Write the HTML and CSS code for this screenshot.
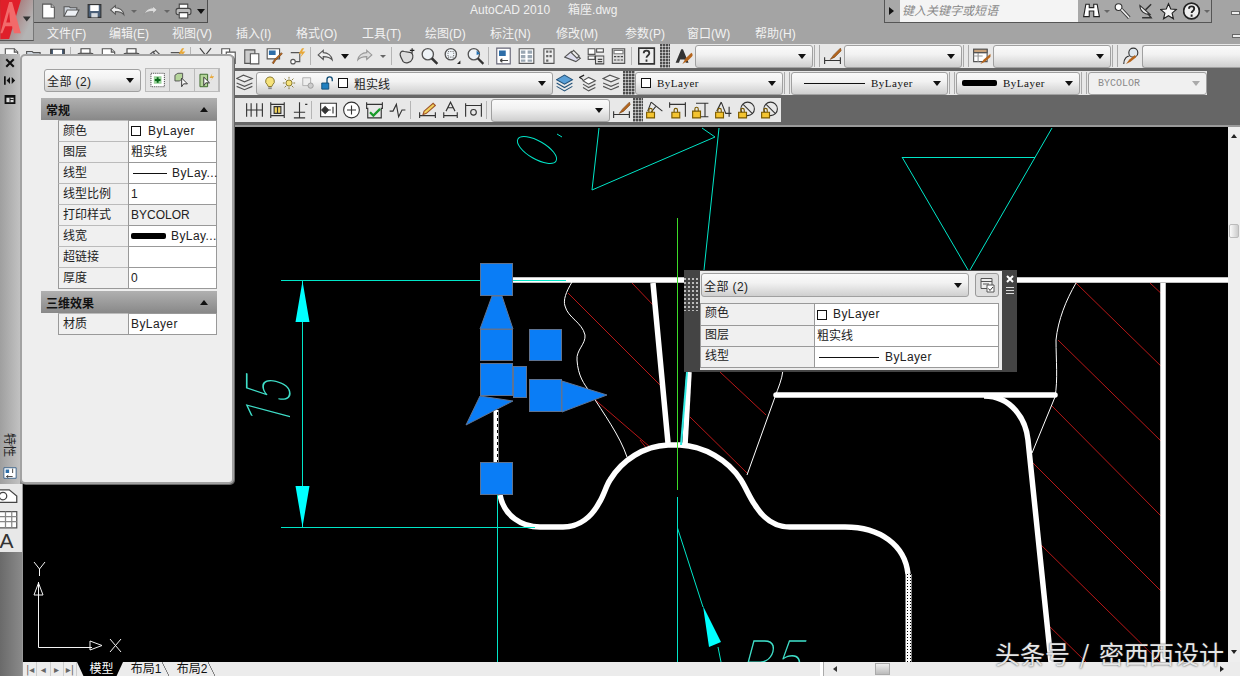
FILE: index.html
```html
<!DOCTYPE html>
<html lang="zh">
<head>
<meta charset="utf-8">
<title>AutoCAD 2010</title>
<link rel="stylesheet" href="styles.css">
</head>
<body>
<svg class="sprite" aria-hidden="true">
  <symbol id="new" viewBox="0 0 16 16"><path d="M2.5 1.5h8l3 3v10h-11z" fill="#fff" stroke="#555"/><path d="M10.5 1.5v3h3" fill="#ccc" stroke="#555"/></symbol>
  <symbol id="open" viewBox="0 0 16 16"><path d="M1 13V4h5l1 1h6v2" fill="#cfd6de" stroke="#555"/><path d="M1 13l3-6h11l-3 6z" fill="#eef1f5" stroke="#555"/></symbol>
  <symbol id="save" viewBox="0 0 16 16"><path d="M2 2h12v12H2z" fill="#4a5f78" stroke="#333"/><path d="M4 2.500h8V8H4z" fill="#fff"/><path d="M5 10h6v4H5z" fill="#d5d9de"/></symbol>
  <symbol id="undo" viewBox="0 0 16 16"><path d="M6 3L1.500 7 6 11V8.500c3 0 6 .5 8 3-.5-4-4-6.500-8-6.500z" fill="#eee" stroke="#555"/></symbol>
  <symbol id="redo" viewBox="0 0 16 16"><path d="M10 3l4.500 4L10 11V8.500c-3 0-6 .5-8 3 .5-4 4-6.500 8-6.500z" fill="#ddd" stroke="#999"/></symbol>
  <symbol id="print" viewBox="0 0 16 16"><path d="M4 1.500h8V6H4z" fill="#fff" stroke="#444"/><rect x="1" y="5.500" width="14" height="6" rx="2" fill="#bbb" stroke="#444"/><path d="M4 9.500h8v5H4z" fill="#fff" stroke="#444"/></symbol>
  <symbol id="binoc" viewBox="0 0 16 16"><path d="M3 2h3v3h4V2h3l2 11h-5V8H6v5H1z" fill="#fff" stroke="#222"/></symbol>
  <symbol id="key" viewBox="0 0 16 16"><circle cx="4.500" cy="4.500" r="3" fill="#fff" stroke="#333"/><path d="M7 6.500l7 7.500" stroke="#333" stroke-width="3"/><path d="M7 6.500l7 7.500" stroke="#eee" stroke-width="1.500"/></symbol>
  <symbol id="sat" viewBox="0 0 16 16"><path d="M3 3a8 8 0 0 0 9 8z" fill="#eee" stroke="#333"/><path d="M8 7l5-5M5 14h8l-3-4" fill="none" stroke="#333" stroke-width="1.300"/></symbol>
  <symbol id="star" viewBox="0 0 16 16"><path d="M8 1.500l2 4.700 5 .4-3.800 3.300 1.200 5L8 12.200l-4.400 2.700 1.200-5L1 6.600l5-.4z" fill="#f4f4f4" stroke="#222"/></symbol>
  <symbol id="cut" viewBox="0 0 16 16"><path d="M3 1l8 10M13 1L5 11" stroke="#444" fill="none"/><circle cx="4" cy="13" r="2" fill="none" stroke="#444"/><circle cx="12" cy="13" r="2" fill="none" stroke="#444"/></symbol>
  <symbol id="copy" viewBox="0 0 16 16"><path d="M2 1.500h7v10H2z" fill="#fff" stroke="#555"/><path d="M6 4.500h8v10H6z" fill="#fff" stroke="#555"/></symbol>
  <symbol id="paste" viewBox="0 0 16 16"><path d="M2 2.500h9v12H2z" fill="#ccc" stroke="#555"/><path d="M7 6h7.500v9H7z" fill="#fff" stroke="#555"/></symbol>
  <symbol id="match" viewBox="0 0 16 16"><path d="M1.500 1.500h11v9h-11z" fill="#fff" stroke="#555"/><path d="M3 3h6v4H3z" fill="#2e6ea8"/><path d="M15 6l-6 6-2 3-1-1 2-3 6-6z" fill="#b5651d" stroke="#6b3a10" stroke-width=".5"/></symbol>
  <symbol id="block" viewBox="0 0 16 16"><circle cx="4" cy="13" r="2" fill="#fff" stroke="#555"/><path d="M2 5h8v8H6" fill="none" stroke="#555"/><path d="M12 1l-3 5h3l-2 4 5-6h-3l2-3z" fill="#e8a838"/></symbol>
  <symbol id="pan" viewBox="0 0 16 16"><path d="M3 9c-2-4 1-6 3-5l6 1c2 1 2 4 1 6-1 3-6 4-8 2z" fill="#ddd" stroke="#444"/><path d="M11 3h4M13 1v4" stroke="#222"/></symbol>
  <symbol id="zoom" viewBox="0 0 16 16"><circle cx="6.500" cy="6.500" r="5" fill="#eef3f7" stroke="#555" stroke-width="1.200"/><path d="M10 10l5 5" stroke="#333" stroke-width="2.200"/></symbol>
  <symbol id="zoomw" viewBox="0 0 16 16"><circle cx="6.500" cy="6.500" r="5" fill="#eef3f7" stroke="#555" stroke-width="1.200"/><path d="M4 4h5v5H4z" fill="none" stroke="#777" stroke-dasharray="1 1"/><path d="M12 15l3-3v3z" fill="#222"/></symbol>
  <symbol id="zoomb" viewBox="0 0 16 16"><circle cx="6.500" cy="6.500" r="5" fill="#eef3f7" stroke="#555" stroke-width="1.200"/><path d="M10 10l5 5" stroke="#333" stroke-width="2"/><path d="M9 3l3 3-3 1z" fill="#1f6fb2"/></symbol>
  <symbol id="props" viewBox="0 0 16 16"><path d="M2 1h12v14H2z" fill="#fff" stroke="#667"/><path d="M4 3h6v5H4z" fill="#2e6ea8"/><path d="M5 12h7M5 12l2-1.500M5 12l2 1.500" stroke="#444" fill="none"/></symbol>
  <symbol id="grid" viewBox="0 0 16 16"><path d="M1.500 1.500h13v13h-13z" fill="#fff" stroke="#555"/><path d="M3 3h4v3H3zM9 3h4v3H9zM3 7h4v3H3zM9 7h4v3H9zM3 11h4v2H3zM9 11h4v2H9z" fill="#9aa7b3"/></symbol>
  <symbol id="tool" viewBox="0 0 16 16"><path d="M3 1.500h9v13H3z" fill="#eee" stroke="#555"/><path d="M5 3h2v2H5zM8 3h2v2H8zM5 7h2v2H5zM8 7h2v2H8zM5 11h2v2H5z" fill="#666"/></symbol>
  <symbol id="sheet" viewBox="0 0 16 16"><path d="M1 9l6-5 8 6-4 3z" fill="#dde" stroke="#555"/><path d="M9 3l5 5-2 2-5-5z" fill="#eee" stroke="#555"/></symbol>
  <symbol id="mark" viewBox="0 0 16 16"><path d="M1.500 1.500h6v5h-6zM9 1.500h6v3H9zM1.500 8h6v3h-6z" fill="#fff" stroke="#555"/><path d="M8 8h7.500v7H8z" fill="#e6e6e6" stroke="#444"/><path d="M10 11h4M10 13h4" stroke="#444"/></symbol>
  <symbol id="calc" viewBox="0 0 16 16"><path d="M2.500 1.500h11v13h-11z" fill="#ddd" stroke="#555"/><path d="M4 3h8v3H4z" fill="#fff" stroke="#777"/><path d="M4 8h2v1H4zM7 8h2v1H7zM10 8h2v1h-2zM4 11h2v1H4zM7 11h2v1H7zM10 11h2v1h-2z" fill="#444"/></symbol>
  <symbol id="helpbox" viewBox="0 0 16 16"><path d="M1 1h14v14H1z" fill="#eee" stroke="#333" stroke-width="1.500"/><path d="M5.500 5.500c0-3 5-3 5 0 0 2-2.500 2-2.500 4M8 11v2" fill="none" stroke="#333" stroke-width="1.600"/></symbol>
  <symbol id="helpc" viewBox="0 0 16 16"><circle cx="8" cy="8" r="7" fill="#eee" stroke="#222" stroke-width="1.500"/><path d="M5.800 6c0-2.800 4.600-2.800 4.600 0 0 2-2.300 1.800-2.300 3.700M8.100 11v2" fill="none" stroke="#222" stroke-width="1.700"/></symbol>
  <symbol id="style" viewBox="0 0 16 16"><path d="M1 14L6 2h1.500l5 12h-2.500l-1-3H5l-1 3z" fill="#333"/><path d="M15 5l-5 5-3 5 5-3 5-5z" fill="#b5651d"/></symbol>
  <symbol id="dimbrush" viewBox="0 0 16 16"><path d="M1 9v6M15 9v6M1 12h14" fill="none" stroke="#333"/><path d="M15 1L9 7l-3 4 4-2 6-6z" fill="#b5651d" stroke="#6b3a10" stroke-width=".5"/></symbol>
  <symbol id="tablebrush" viewBox="0 0 16 16"><path d="M1 2h12v11H1z" fill="#fff" stroke="#555"/><path d="M1 5h12M1 8h8M5 5v8" stroke="#999"/><path d="M1 2h12v3H1z" fill="#c9a27a" stroke="#555"/><path d="M16 6l-6 5-3 4 4-2 6-5z" fill="#b5651d"/></symbol>
  <symbol id="mlbrush" viewBox="0 0 16 16"><circle cx="10.500" cy="5" r="4" fill="#dfe8ef" stroke="#333"/><path d="M2 15c0-5 3-7 5-7" fill="none" stroke="#333"/><path d="M12 7l-5 4-3 4 4-2 5-4z" fill="#b5651d"/></symbol>
  <symbol id="layers" viewBox="0 0 16 16"><path d="M1 4l6-3 8 3-7 3z" fill="#eee" stroke="#555"/><path d="M1 8l7 3 7-3M1 11l7 3 7-3" fill="none" stroke="#555"/></symbol>
  <symbol id="layers2" viewBox="0 0 16 16"><path d="M1 5l7-4 7 4-7 4z" fill="#5aa0d8" stroke="#24537a"/><path d="M1 8l7 4 7-4M1 11l7 4 7-4" fill="none" stroke="#24537a"/></symbol>
  <symbol id="layers3" viewBox="0 0 16 16"><path d="M4 6l5-3 6 3-6 3z" fill="#fff" stroke="#555"/><path d="M4 9l5 3 6-3M4 12l5 3 6-3" fill="none" stroke="#555"/><path d="M5 1L1 3l3 2" fill="none" stroke="#222"/></symbol>
  <symbol id="bulb" viewBox="0 0 16 16"><path d="M8 1a5 5 0 0 0-3 9l1 2h4l1-2a5 5 0 0 0-3-9z" fill="#f6e27a" stroke="#7a6a20"/><path d="M6 13h4v2H6z" fill="#888"/></symbol>
  <symbol id="sun" viewBox="0 0 16 16"><circle cx="8" cy="8" r="3.500" fill="#f6e27a" stroke="#7a6a20"/><path d="M8 1v2M8 13v2M1 8h2M13 8h2M3 3l1.500 1.500M11.500 11.500L13 13M3 13l1.500-1.500M11.500 4.500L13 3" stroke="#7a6a20"/></symbol>
  <symbol id="vp" viewBox="0 0 16 16"><path d="M2 2h9v9H2z" fill="#eee" stroke="#aaa"/><circle cx="11" cy="11" r="3" fill="#ccc" stroke="#999"/></symbol>
  <symbol id="lock" viewBox="0 0 16 16"><path d="M2 8h8v7H2z" fill="#1f7fbf" stroke="#0d4a73"/><path d="M8 8V4a3 3 0 0 1 6 0v2" fill="none" stroke="#0d4a73" stroke-width="1.500"/></symbol>
  <symbol id="dimt" viewBox="0 0 16 16"><path d="M1 2v12M15 2v12M1 8h14M5 2v12M10 2v12" fill="none" stroke="#333"/></symbol>
  <symbol id="dimb" viewBox="0 0 16 16"><path d="M2 1v14M14 1v14M2 3h12M2 13h12" stroke="#333" fill="none"/><path d="M5 5h6v6H5z" fill="#f1d35c" stroke="#333"/><path d="M8 5v6" stroke="#333"/></symbol>
  <symbol id="dimo" viewBox="0 0 16 16"><path d="M8 1v9M3 10h10M8 10v5M3 15h10M13 3l2 0" stroke="#333" fill="none"/></symbol>
  <symbol id="cen" viewBox="0 0 16 16"><path d="M1 2h14v12H1z" fill="#fff" stroke="#333"/><path d="M5 5l3 3-3 3-3-3zM8 8h2" fill="#333" stroke="#333"/><path d="M12 5v6" stroke="#333"/></symbol>
  <symbol id="circ" viewBox="0 0 16 16"><circle cx="8" cy="8" r="7" fill="#fff" stroke="#333"/><path d="M4 8h8M8 4v8" stroke="#333"/></symbol>
  <symbol id="chk" viewBox="0 0 16 16"><path d="M1 1v6M15 1v6M1 3h14M2 6v9h12V6" fill="none" stroke="#333"/><path d="M4 10l3 3 6-6" fill="none" stroke="#1a9a2a" stroke-width="2"/></symbol>
  <symbol id="jog" viewBox="0 0 16 16"><path d="M1 9h3l3-6 2 11 3-6h3" fill="none" stroke="#333"/></symbol>
  <symbol id="dimpen" viewBox="0 0 16 16"><path d="M1 10v5M15 10v5M1 13h14" fill="none" stroke="#333"/><path d="M5 9l8-7 2 2-8 7-3 1z" fill="#f1d35c" stroke="#a0552a"/></symbol>
  <symbol id="dima" viewBox="0 0 16 16"><path d="M2 10v5M14 10v5M2 13h12M4 9l4-8 4 8M5.500 6h5" fill="none" stroke="#333"/></symbol>
  <symbol id="dimu" viewBox="0 0 16 16"><path d="M1 2v12M15 2v12M1 4h14" fill="none" stroke="#333"/><circle cx="8" cy="10" r="2.500" fill="none" stroke="#333"/></symbol>
  <symbol id="lk-a" viewBox="0 0 16 16"><path d="M5 1l-3 8M5 1l10 8M9 5l-4 5" fill="none" stroke="#333"/><path d="M1 10h7v5H1z" fill="#f4c430" stroke="#7a5a00"/><path d="M3 10V8a1.500 1.500 0 0 1 3 0v2" fill="none" stroke="#7a5a00"/></symbol>
  <symbol id="lk-h" viewBox="0 0 16 16"><path d="M1 1v5M15 1v13M1 3h14" fill="none" stroke="#333"/><path d="M3 10h7v5H3z" fill="#f4c430" stroke="#7a5a00"/><path d="M5 10V8a1.500 1.500 0 0 1 3 0v2" fill="none" stroke="#7a5a00"/></symbol>
  <symbol id="lk-v" viewBox="0 0 16 16"><path d="M4 2h11M8 14h7M12 2v12" fill="none" stroke="#333"/><path d="M1 9h7v6H1z" fill="#f4c430" stroke="#7a5a00"/><path d="M3 9V7a1.500 1.500 0 0 1 3 0v2" fill="none" stroke="#7a5a00"/></symbol>
  <symbol id="lk-o" viewBox="0 0 16 16"><path d="M6 1l-4 8M6 1l4 10h5M13 5v9" fill="none" stroke="#333"/><path d="M1 10h7v5H1z" fill="#f4c430" stroke="#7a5a00"/><path d="M3 10V8a1.500 1.500 0 0 1 3 0v2" fill="none" stroke="#7a5a00"/></symbol>
  <symbol id="lk-r" viewBox="0 0 16 16"><circle cx="9" cy="7" r="6" fill="none" stroke="#333"/><path d="M5 3l8 8" stroke="#333"/><path d="M1 10h7v5H1z" fill="#f4c430" stroke="#7a5a00"/><path d="M3 10V8a1.500 1.500 0 0 1 3 0v2" fill="none" stroke="#7a5a00"/></symbol>
  <symbol id="quick" viewBox="0 0 16 16"><path d="M2 1.500h11v10H2z" fill="#eee" stroke="#555"/><path d="M2 4.500h11M4 7h6" stroke="#555"/><path d="M8 8h7v7H8z" fill="#fff" stroke="#555"/><path d="M9.500 11.500l1.500 2 3-3.500" fill="none" stroke="#333"/></symbol>
  <symbol id="qsel" viewBox="0 0 16 16"><path d="M1 1h14v14H1z" fill="#fff" stroke="#333" stroke-dasharray="1 1"/><path d="M4 4h8v8H4z" fill="#9ad39a"/><path d="M8 5v6M5 8h6" stroke="#0a6a1a" stroke-width="2"/></symbol>
  <symbol id="pick" viewBox="0 0 16 16"><path d="M1 9V3l3-2h5v5L6 9z" fill="#b5d59a" stroke="#555"/><path d="M8 6v9l2-3h4z" fill="#fff" stroke="#333"/></symbol>
  <symbol id="pseudo" viewBox="0 0 16 16"><path d="M1 2h8v13H1z" fill="#b5d59a" stroke="#3c6a2a"/><path d="M5 5v9l2-3h4z" fill="#fff" stroke="#333"/><path d="M14 1l-3 5h3l-2 3 4-5h-3z" fill="#e8a838"/></symbol>
  <symbol id="wblock" viewBox="0 0 16 16"><path d="M1 2h14v12H1z" fill="#fff" stroke="#2e5a86"/><path d="M3 4h4v4H3z" fill="#2e6ea8"/><path d="M4 12h7M4 12l2-1.500M4 12l2 1.500M11 3v5" stroke="#333" fill="none"/></symbol>
  <symbol id="polyg" viewBox="0 0 16 16"><path d="M-3 3h12l6 5v5H-3z" fill="#fff" stroke="#444"/><circle cx="4" cy="8" r="3" fill="none" stroke="#444"/></symbol>
  <symbol id="table" viewBox="0 0 16 16"><path d="M1 2h14v13H1z" fill="#fff" stroke="#555"/><path d="M1 6h14M1 10h14M6 2v13M11 2v13" stroke="#888"/></symbol>
</svg>

<header class="head">
  <div class="logo">
    <svg class="logo-art" viewBox="0 0 33 41">
      <path class="logo-red" d="M0 0h21L9 40H0z"/>
      <path class="logo-lite" d="M12 2l9 32h-7l-2-7H5l-3 7H0l9-32z"/>
      <path class="logo-red" d="M9 12l1 11H6z"/>
      <path class="logo-caret" d="M23 17h8l-4 5z"/>
    </svg>
  </div>
  <div class="head-main">
    <div class="titlebar">
      <div class="qat">
        <svg class="ic"><use href="#new"/></svg>
        <svg class="ic"><use href="#open"/></svg>
        <svg class="ic"><use href="#save"/></svg>
        <svg class="ic"><use href="#undo"/></svg>
        <i class="caret caret-soft"></i>
        <svg class="ic"><use href="#redo"/></svg>
        <i class="caret caret-soft"></i>
        <svg class="ic"><use href="#print"/></svg>
        <i class="caret"></i>
      </div>
      <div class="doc-title"><span>AutoCAD 2010</span><span>箱座.dwg</span></div>
      <div class="search">
        <i class="play"></i>
        <div class="search-box">键入关键字或短语</div>
        <svg class="ic"><use href="#binoc"/></svg>
        <i class="caret caret-soft"></i>
        <svg class="ic"><use href="#key"/></svg>
        <svg class="ic"><use href="#sat"/></svg>
        <svg class="ic"><use href="#star"/></svg>
        <svg class="ic"><use href="#helpc"/></svg>
        <i class="caret caret-soft"></i>
      </div>
      <i class="winbtn"></i>
    </div>
    <div class="menubar">
      <nav class="menu">
        <span>文件(F)</span><span>编辑(E)</span><span>视图(V)</span><span>插入(I)</span><span>格式(O)</span><span>工具(T)</span><span>绘图(D)</span><span>标注(N)</span><span>修改(M)</span><span>参数(P)</span><span>窗口(W)</span><span>帮助(H)</span>
      </nav>
      <i class="winbtn"></i>
    </div>
  </div>
</header>

<section class="toolbars">
  <div class="row">
    <div class="tb tb-std">
      <svg class="ic"><use href="#new"/></svg>
      <svg class="ic"><use href="#open"/></svg>
      <svg class="ic"><use href="#save"/></svg>
      <i class="sep"></i>
      <svg class="ic"><use href="#print"/></svg>
      <svg class="ic"><use href="#new"/></svg>
      <svg class="ic"><use href="#print"/></svg>
      <svg class="ic"><use href="#sheet"/></svg>
      <svg class="ic"><use href="#block"/></svg>
      <i class="sep"></i>
      <svg class="ic"><use href="#cut"/></svg>
      <svg class="ic"><use href="#copy"/></svg>
      <svg class="ic"><use href="#paste"/></svg>
      <svg class="ic"><use href="#match"/></svg>
      <svg class="ic"><use href="#block"/></svg>
      <i class="sep"></i>
      <svg class="ic"><use href="#undo"/></svg>
      <i class="caret caret-slot"></i>
      <svg class="ic"><use href="#redo"/></svg>
      <i class="caret caret-slot caret-soft"></i>
      <i class="sep"></i>
      <svg class="ic"><use href="#pan"/></svg>
      <svg class="ic"><use href="#zoom"/></svg>
      <svg class="ic"><use href="#zoomw"/></svg>
      <svg class="ic"><use href="#zoomb"/></svg>
      <i class="sep"></i>
      <svg class="ic"><use href="#props"/></svg>
      <svg class="ic"><use href="#grid"/></svg>
      <svg class="ic"><use href="#tool"/></svg>
      <svg class="ic"><use href="#sheet"/></svg>
      <svg class="ic"><use href="#mark"/></svg>
      <svg class="ic"><use href="#calc"/></svg>
      <i class="sep"></i>
      <svg class="ic"><use href="#helpbox"/></svg>
    </div>
    <i class="grip"></i>
    <div class="tb tb-fill">
      <svg class="ic"><use href="#style"/></svg>
      <div class="dd dd-118"><i class="caret"></i></div>
      <i class="gsep"></i>
      <svg class="ic"><use href="#dimbrush"/></svg>
      <div class="dd dd-118"><i class="caret"></i></div>
      <i class="gsep"></i>
      <svg class="ic"><use href="#tablebrush"/></svg>
      <div class="dd dd-118"><i class="caret"></i></div>
      <i class="gsep"></i>
      <svg class="ic"><use href="#mlbrush"/></svg>
      <div class="dd dd-grow"></div>
    </div>
  </div>

  <div class="row row-inset">
    <div class="tb">
      <svg class="ic"><use href="#layers"/></svg>
      <div class="dd dd-layer">
        <svg class="ic-s"><use href="#bulb"/></svg>
        <svg class="ic-s"><use href="#sun"/></svg>
        <svg class="ic-s"><use href="#vp"/></svg>
        <svg class="ic-s"><use href="#lock"/></svg>
        <i class="sw"></i>
        <span class="dd-text">粗实线</span>
        <i class="caret caret-end"></i>
      </div>
      <svg class="ic"><use href="#layers2"/></svg>
      <svg class="ic"><use href="#layers3"/></svg>
      <svg class="ic ic-narrow"><use href="#layers"/></svg>
    </div>
    <i class="grip grip-12"></i>
    <div class="tb">
      <div class="dd dd-148"><i class="sw"></i><span class="serif">ByLayer</span><i class="caret caret-end"></i></div>
      <i class="gsep"></i>
      <div class="dd dd-157"><i class="ln ln-long"></i><span class="serif">ByLayer</span><i class="caret caret-end"></i></div>
      <i class="gsep"></i>
      <div class="dd dd-123"><i class="lw"></i><span class="serif">ByLayer</span><i class="caret caret-end"></i></div>
      <i class="gsep"></i>
      <div class="dd dd-119 dd-off"><span class="mono-off">BYCOLOR</span><i class="caret caret-end caret-off"></i></div>
    </div>
  </div>

  <div class="row row-inset">
    <div class="tb">
      <i class="tb-stub"></i>
      <svg class="ic"><use href="#dimt"/></svg>
      <svg class="ic"><use href="#dimb"/></svg>
      <svg class="ic ic-21"><use href="#dimo"/></svg>
      <i class="sep sep-w"></i>
      <svg class="ic"><use href="#cen"/></svg>
      <svg class="ic"><use href="#circ"/></svg>
      <svg class="ic"><use href="#chk"/></svg>
      <svg class="ic"><use href="#jog"/></svg>
      <i class="sep sep-w"></i>
      <svg class="ic"><use href="#dimpen"/></svg>
      <svg class="ic"><use href="#dima"/></svg>
      <svg class="ic"><use href="#dimu"/></svg>
      <i class="sep sep-x"></i>
      <div class="dd dd-119b"><i class="caret"></i></div>
      <svg class="ic"><use href="#dimbrush"/></svg>
    </div>
    <i class="grip"></i>
    <div class="tb">
      <svg class="ic"><use href="#lk-a"/></svg>
      <svg class="ic"><use href="#lk-h"/></svg>
      <svg class="ic"><use href="#lk-v"/></svg>
      <svg class="ic"><use href="#lk-o"/></svg>
      <svg class="ic"><use href="#lk-r"/></svg>
      <svg class="ic"><use href="#lk-r"/></svg>
    </div>
  </div>
</section>

<main class="work">
  <aside class="dock">
    <div class="dock-top"></div>
    <div class="draw-tb">
      <svg class="ic-d"><use href="#polyg"/></svg>
      <svg class="ic-d"><use href="#table"/></svg>
      <span class="draw-a">A</span>
    </div>
  </aside>
  <div class="center">
    <div class="view">
      <svg class="cad" viewBox="23 127 1205 535">
        <defs>
          <pattern id="dither" width="3" height="3" patternUnits="userSpaceOnUse">
            <rect width="3" height="3" fill="#fff"/>
            <rect x="1" y="1" width="1" height="1" fill="#000"/>
          </pattern>
        </defs>

        <path class="rd" d="M568 293L663 388M632 283L655 307M593 398L650 447M720 372L766 415M690 417L747 473M640 440L648 450M1150 283L1165 297M1076 283L1165 370M1058 340L1163 443M1051 405L1162 517M1030 460L1162 592M1038 542L1163 665M1046 623L1086 662"/>

        <path class="th" d="M572 282C566 292 563 300 565 306C568 318 582 322 585 335C586 344 576 350 577 360C578 376 584 384 590 392C604 414 620 436 627 457"/>
        <path class="th" d="M783 370C782 380 778 388 775 397L747 475"/>
        <path class="th" d="M1076 283C1066 300 1058 320 1056 340C1056 360 1058 380 1055 397L1032 453"/>

        <path class="wh" d="M513 280H684M1017 280H1228"/>
        <path class="wh" d="M653 283L668 443"/>
        <path class="wh" d="M689 372L685 445"/>
        <path class="wh" d="M1163 283V662"/>
        <path class="wh wh-round" d="M776 395H1055"/>
        <path class="wh" d="M984 396C1012 396 1026 420 1028 440L1051 662"/>
        <path class="wh" d="M500 495C504 516 522 527 540 527H563C580 527 592 516 599 503C604 495 606 486 610 480C622 460 644 446 668 445H680C704 446 728 460 741 480C746 488 750 498 755 505C763 518 775 527 790 527H845C880 527 905 545 908 574"/>
        <rect class="dots" x="905.500" y="574" width="6" height="88"/>
        <path class="wh wh-5" d="M496 410V462"/>
        <path class="dash" d="M497.500 412V462"/>

        <path class="gn" d="M677.500 218V490"/>
        <path class="cy" d="M281 280.500H480M513 280.500H566M281 527.500H535"/>
        <path class="cy" d="M302.500 280V527M497.500 495V662"/>
        <path class="cy" d="M599 128L592 190L715 137L702 128M719 128L704 270"/>
        <path class="cy" d="M902 157.500H1035M902 157L968 270M1052 128L970 270"/>
        <path class="cy cy-2" d="M687 372L681 445"/>
        <path class="cy" d="M677.500 497V662M677.500 528L703 607M718 647L721 662"/>
        <ellipse class="cy" cx="537" cy="150" rx="22" ry="9" transform="rotate(30 537 150)"/>
        <path class="cy" d="M557 134L562 137"/>
        <path class="ar" d="M302.500 281L309.500 322H295.500zM302.500 527L309.500 486H295.500zM703 606L721 642L709 647z"/>
        <text class="dimtxt" transform="translate(290 430) rotate(-90) skewX(-15) scale(.7 1)">15</text>
        <text class="dimtxt dimtxt-r" transform="translate(738 680) skewX(-15) scale(.9 1)">R5</text>

        <path class="ucs" d="M38.500 582V647.500H92M38.500 583L34 595H43zM102 645.500L90 641V650z"/>
        <path class="ucs" d="M34 562L39.500 569L45 562M39.500 569V576"/>
        <path class="ucs" d="M110 639L121 652M121 639L110 652"/>

        <path class="grip-s" d="M492 296h10l11 33h-33z"/>
        <path class="grip-s" d="M562 381L607 395L562 412z"/>
        <path class="grip-s" d="M480 396L513 401L466 425z"/>
        <rect class="grip-s" x="480.500" y="263.500" width="32" height="32"/>
        <rect class="grip-s" x="480.500" y="329.500" width="32" height="31"/>
        <rect class="grip-s" x="529.500" y="329.500" width="32" height="31"/>
        <rect class="grip-s" x="513.500" y="366.500" width="13" height="31"/>
        <rect class="grip-s" x="480.500" y="363.500" width="32" height="32"/>
        <rect class="grip-s" x="529.500" y="379.500" width="32" height="32"/>
        <rect class="grip-s" x="480.500" y="462.500" width="32" height="32"/>
      </svg>
      <div class="vscroll">
        <i class="arr arr-up"></i>
        <i class="vthumb"></i>
        <i class="arr arr-down"></i>
      </div>
    </div>
    <footer class="tabs">
      <div class="tab-nav"><b>|◂</b><b>◂</b><b>▸</b><b>▸|</b></div>
      <span class="tab tab-on">模型</span>
      <span class="tab">布局1</span>
      <span class="tab">布局2</span>
      <div class="hscroll">
        <i class="hsep"></i>
        <i class="arr arr-left"></i>
        <i class="hthumb"></i>
        <i class="arr arr-right"></i>
      </div>
    </footer>
  </div>
</main>

<aside class="palette">
  <div class="pal-title">
    <svg class="pal-x" viewBox="0 0 12 12"><path d="M1.500 1.500l9 9M10.500 1.500l-9 9"/></svg>
    <svg class="pal-arrows" viewBox="0 0 14 10"><path d="M1 0v10" class="pa-l"/><path d="M3 5l4-4v8zM13 5l-4-4v8z"/></svg>
    <svg class="pal-menu" viewBox="0 0 12 10"><path d="M0 0h12v10H0z"/><path class="pm-w" d="M2 3h8v5H2z"/><path d="M6 3v5M6 5h4"/></svg>
    <span class="pal-name">特性</span>
    <svg class="ic-p"><use href="#wblock"/></svg>
  </div>
  <div class="pal-body">
    <div class="pal-top">
      <div class="dd dd-pal"><span class="val">全部 (2)</span><i class="caret caret-end"></i></div>
      <div class="pal-btns">
        <svg class="ic-b"><use href="#qsel"/></svg>
        <svg class="ic-b"><use href="#pick"/></svg>
        <svg class="ic-b"><use href="#pseudo"/></svg>
      </div>
    </div>
    <div class="sect"><span>常规</span><i class="up"></i></div>
    <div class="grid">
      <div class="pr"><span class="k">颜色</span><span class="v"><i class="sw"></i><span class="val">ByLayer</span></span></div>
      <div class="pr"><span class="k">图层</span><span class="v">粗实线</span></div>
      <div class="pr"><span class="k">线型</span><span class="v"><i class="ln"></i><span class="val">ByLay...</span></span></div>
      <div class="pr"><span class="k">线型比例</span><span class="v">1</span></div>
      <div class="pr"><span class="k">打印样式</span><span class="v v-off">BYCOLOR</span></div>
      <div class="pr"><span class="k">线宽</span><span class="v"><i class="lw lw-s"></i><span class="val">ByLay...</span></span></div>
      <div class="pr"><span class="k">超链接</span><span class="v"></span></div>
      <div class="pr"><span class="k">厚度</span><span class="v">0</span></div>
    </div>
    <div class="sect sect-2"><span>三维效果</span><i class="up"></i></div>
    <div class="grid">
      <div class="pr"><span class="k">材质</span><span class="v"><span class="val">ByLayer</span></span></div>
    </div>
  </div>
</aside>

<aside class="quick">
  <i class="q-grip"></i>
  <div class="q-body">
    <div class="q-top">
      <div class="dd dd-q"><span class="val">全部 (2)</span><i class="caret caret-end"></i></div>
      <svg class="q-btn"><use href="#quick"/></svg>
    </div>
    <div class="q-grid">
      <div class="qr"><span class="k">颜色</span><span class="v"><i class="sw"></i><span class="val">ByLayer</span></span></div>
      <div class="qr"><span class="k">图层</span><span class="v">粗实线</span></div>
      <div class="qr"><span class="k">线型</span><span class="v"><i class="ln ln-q"></i><span class="val">ByLayer</span></span></div>
    </div>
  </div>
  <div class="q-side">
    <svg class="q-x" viewBox="0 0 8 8"><path d="M1 1l6 6M7 1L1 7"/></svg>
    <i class="q-lines"></i>
  </div>
</aside>

<div class="watermark">头条号 / 密西西设计</div>
</body>
</html>
```

FILE: styles.css
```css
* { box-sizing: border-box; }
html, body { margin: 0; height: 100%; }
body {
  position: relative;
  width: 1240px;
  height: 676px;
  overflow: hidden;
  display: flex;
  flex-direction: column;
  background: #666;
  font: 12px "Liberation Sans", "Noto Sans CJK SC", sans-serif;
  color: #222;
}
i { display: block; font-style: normal; }
.sprite { position: absolute; width: 0; height: 0; }

/* header */
.head { display: flex; height: 44px; background: #a4a4a4; flex: none; }
.logo { flex: 0 0 33px; height: 41px; background: linear-gradient(115deg, #c22 0, #a88 45%, #b4b4b4 80%); border-bottom: 1px solid #555; border-right: 1px solid #777; }
.logo-art { display: block; width: 33px; height: 40px; }
.logo-red { fill: #e01f2a; }
.logo-lite { fill: #f26a6a; }
.logo-caret { fill: #333; }
.head-main { flex: 1; display: flex; flex-direction: column; min-width: 0; }
.titlebar { flex: 0 0 22px; display: flex; align-items: flex-start; }
.qat { display: flex; align-items: center; width: 174px; height: 23px; padding-left: 3px; background: #9c9c9c; border: 1px solid #4f4f4f; border-width: 0 1px 1px 0; }
.qat .ic { height: 22px; width: 24px; padding: 2px 3px; }
.qat .caret { margin: 0 2px; }
.doc-title { margin-left: 262px; line-height: 20px; color: #f0f0f0; display: flex; gap: 18px; }
.search { margin-left: auto; display: flex; align-items: center; width: 328px; height: 23px; padding-left: 4px; background: #a8a8a8; border: 1px solid #555; border-width: 0 1px 1px; }
.play { width: 0; height: 0; border: 4px solid transparent; border-left: 5px solid #111; border-right: 0; margin-right: 6px; }
.search-box { flex: 0 0 178px; height: 22px; background: #f4f4f4; color: #888; font-style: italic; font-size: 12px; line-height: 22px; padding-left: 2px; margin-right: 2px; }
.search .ic { width: 23px; height: 22px; padding: 2px 2.500px; }
.search .caret { margin: 0 1px; }
.winbtn { width: 9px; height: 4px; margin: 11px 0 0 19px; background: #eee; border: 1px solid #666; flex: none; }
.menubar { flex: 0 0 22px; display: flex; }
.menu { flex: none; width: 1178px; padding-left: 13px; display: grid; grid-template-columns: 62px 63px 64px 60px 66px 63px 65px 66px 69px 62px 68px auto; line-height: 22px; color: #f2f2f2; }
.menu span { white-space: nowrap; }
.menubar .winbtn { margin: 11px 0 0 20px; }

/* toolbars */
.toolbars { flex: 0 0 83px; display: flex; flex-direction: column; gap: 3px; background: #666; padding-top: 0; border-bottom: 2px solid #9a9a9a; }
.row { display: flex; height: 24px; flex: none; }
.row-inset { padding-left: 233px; }
.tb { display: flex; align-items: center; height: 24px; background: #e8e8e8; }
.tb-std { flex: 0 0 660px; }
.tb-fill { flex: 1; min-width: 0; padding-left: 2px; }
.ic { flex: 0 0 23px; width: 23px; height: 24px; padding: 3px 2.500px; display: block; }
.ic-narrow { flex-basis: 24px; width: 24px; }
.ic-21 { flex-basis: 21px; width: 21px; padding: 3px 1.500px; }
.ic-s { flex: 0 0 16px; width: 14px; height: 14px; margin-right: 3px; }
.sep { flex: 0 0 4px; width: 4px; height: 18px; border-left: 1px solid #b5b5b5; margin-left: 1px; }
.sep-w { flex-basis: 6px; width: 6px; }
.sep-x { flex-basis: 5px; width: 5px; }
.gsep { flex: 0 0 6px; width: 6px; height: 22px; border: 1px solid #aaa; border-width: 0 1px; margin: 0 1px; }
.grip { flex: 0 0 10px; width: 10px; height: 24px; background: #4d4d4d radial-gradient(#cfcfcf 0.9px, transparent 1.2px) 1px 1px / 3px 3px; }
.grip-12 { flex-basis: 12px; width: 12px; }
.tb-stub { flex: 0 0 10px; }
.caret { width: 0; height: 0; border: 4px solid transparent; border-top: 5px solid #111; border-bottom: 0; flex: none; }
.caret-soft { border-top-color: #666; border-width: 3px 3px 0; }
.caret-off { border-top-color: #aaa; }
.caret-slot { margin: 0 4px; }
.caret-end { margin-left: auto; }

.dd { display: flex; align-items: center; justify-content: flex-end; height: 23px; padding: 0 6px 0 5px; background: linear-gradient(#fafafa, #f2f2f2 40%, #cfcfcf); border: 1px solid #a0a0a0; border-radius: 3px; flex: none; }
.dd-118 { width: 118px; }
.dd-119b { width: 119px; }
.dd-grow { flex: 1; border-right: 0; border-radius: 3px 0 0 3px; }
.dd-layer { width: 297px; justify-content: flex-start; }
.dd-148 { width: 148px; justify-content: flex-start; }
.dd-157 { width: 157px; justify-content: flex-start; }
.dd-123 { width: 124px; justify-content: flex-start; }
.dd-119 { width: 119px; justify-content: flex-start; }
.dd-off { background: #f0f0f0; }
.dd-text { margin-left: 6px; }
.serif { font: 11px "Liberation Serif", serif; letter-spacing: .5px; margin-left: 6px; color: #111; }
.mono-off { font: 10px "Liberation Mono", monospace; color: #8a8a8a; margin-left: 4px; }
.sw { width: 10px; height: 10px; background: #fff; border: 1px solid #111; flex: none; }
.ln { width: 34px; height: 1px; background: #111; flex: none; margin-right: 5px; }
.ln-long { width: 61px; margin-left: 7px; margin-right: 0; }
.lw { width: 35px; height: 6px; background: #000; border-radius: 2px; flex: none; }
.lw-s { margin-right: 5px; }

/* work area */
.work { flex: 1; display: flex; min-height: 0; }
.dock { flex: 0 0 23px; display: flex; flex-direction: column; background: linear-gradient(90deg, #6a6a6a, #8a8a8a); border-right: 1px solid #999; }
.dock-top { flex: 0 0 357px; }
.draw-tb { flex: 0 0 68px; display: flex; flex-direction: column; align-items: center; background: #e8e8e8; }
.ic-d { width: 20px; height: 20px; flex: none; margin: 2px 0 1px -6px; display: block; }
.draw-a { font-size: 21px; line-height: 22px; color: #333; margin-left: -9px; }
.center { flex: 1; display: flex; flex-direction: column; min-width: 0; }
.view { flex: 0 0 535px; display: flex; }
.cad { flex: 0 0 1205px; width: 1205px; height: 535px; background: #000; display: block; }
.vscroll { flex: 1; display: flex; flex-direction: column; align-items: center; background: #eee; padding: 7px 0 8px; }
.vthumb { width: 10px; height: 14px; margin-top: 86px; background: linear-gradient(90deg, #fafafa, #ccc); border: 1px solid #bbb; border-radius: 2px; }
.arr { width: 0; height: 0; border: 3px solid transparent; flex: none; }
.arr-up { border-bottom: 4px solid #222; border-top: 0; }
.arr-down { border-top: 4px solid #222; border-bottom: 0; margin-top: auto; }
.arr-left { border-right: 4px solid #333; border-left: 0; margin-left: 9px; }
.arr-right { border-left: 4px solid #222; border-right: 0; margin-left: auto; margin-right: 16px; }
.rd { stroke: #b81818; stroke-width: 1; fill: none; }
.th { stroke: #fff; stroke-width: 1; fill: none; }
.wh { stroke: #fff; stroke-width: 5.500; fill: none; }
.wh-round { stroke-linecap: round; }
.wh-5 { stroke-width: 5; }
.dash { stroke: #000; stroke-width: 1; stroke-dasharray: 3 3; fill: none; }
.dots { fill: url(#dither); }
.gn { stroke: #3cdc28; stroke-width: 1; fill: none; }
.cy { stroke: #00e6c8; stroke-width: 1; fill: none; }
.cy-2 { stroke-width: 2; stroke: #30e8e0; }
.ar { fill: #00ffff; }
.dimtxt { font: 100 62px Roboto, "Liberation Sans", sans-serif; fill: #3fdfc9; }
.dimtxt-r { font-size: 56px; }
.ucs { stroke: #f4f4f4; stroke-width: 1; fill: none; }
.grip-s { fill: #0a7df6; stroke: #5f7391; stroke-width: 1; }

/* layout tabs */
.tabs { flex: 1; display: flex; align-items: stretch; background: #ececec; overflow: hidden; }
.tab-nav { flex: 0 0 54px; display: flex; padding-left: 1px; }
.tab-nav b { flex: 1; font: 10px "DejaVu Sans", sans-serif; color: #666; text-align: center; line-height: 15px; border-right: 1px solid #ccc; }
.tab { flex: none; width: 46px; text-align: center; font-size: 12px; line-height: 15px; color: #111; white-space: nowrap; background: linear-gradient(to top right, transparent calc(50% - .7px), #555, transparent calc(50% + .7px)) right / 7px 100% no-repeat; }
.tab-on { background: #000; color: #fff; clip-path: polygon(0 0, 100% 0, 86% 100%, 14% 100%); padding-left: 3px; }
.hscroll { flex: 1; display: flex; align-items: center; margin-left: 605px; }
.hsep { width: 4px; height: 14px; background: #fff; border-right: 1px solid #aaa; }
.hthumb { width: 15px; height: 12px; margin-left: 38px; background: linear-gradient(#eee, #bbb); border: 1px solid #aaa; }

/* properties palette */
.palette { position: absolute; left: 0; top: 54px; width: 234px; height: 430px; display: flex; }
.pal-title { flex: 0 0 20px; display: flex; flex-direction: column; align-items: center; background: linear-gradient(90deg, #9f9f9f, #c2c2c2); padding-top: 4px; }
.pal-x { width: 10px; height: 10px; fill: none; stroke: #111; stroke-width: 2.500; }
.pal-arrows { width: 12px; height: 9px; margin-top: 8px; fill: #111; }
.pa-l { stroke: #111; stroke-width: 2; }
.pal-menu { width: 12px; height: 9px; margin-top: 10px; fill: #111; }
.pm-w { fill: #ddd; }
.pal-menu path:last-child { stroke: #111; fill: none; }
.pal-name { writing-mode: vertical-rl; text-orientation: sideways; margin-top: auto; font-size: 12px; color: #222; }
.ic-p { width: 14px; height: 16px; margin: 8px 0 3px; display: block; }
.pal-body { flex: 1; min-width: 0; background: #eeeeee; border: 2px solid #a2a2a2; border-radius: 5px; padding: 13px 16px 0 19px; box-shadow: 1px 1px 0 #666; }
.pal-top { display: flex; padding-left: 3px; height: 29px; }
.dd-pal { width: 97px; height: 23px; margin-right: 4px; flex: none; padding-left: 2px; }
.val { letter-spacing: .4px; white-space: nowrap; }
.pal-btns { display: flex; flex: none; width: 75px; height: 24px; border: 1px solid #bbb; background: #e4e4e4; margin-top: -1px; }
.ic-b { flex: 1; width: 25px; height: 22px; padding: 3px 4px; border-right: 1px solid #bbb; display: block; }
.sect { display: flex; align-items: center; justify-content: space-between; height: 22px; margin-right: -1px; padding: 0 9px 0 5px; background: linear-gradient(#b0b0b0, #888); font-weight: 700; color: #111; }
.sect-2 { margin-top: 2px; }
.up { width: 0; height: 0; border: 4px solid transparent; border-bottom: 5px solid #111; border-top: 0; }
.grid { margin-left: 17px; margin-right: -1px; border-bottom: 1px solid #999; }
.pr { display: grid; grid-template-columns: 70px 89px; height: 21px; line-height: 20px; }
.k { background: #f0f0f0; padding-left: 4px; border-top: 1px solid #bbb; border-left: 1px solid #999; white-space: nowrap; }
.v { display: flex; align-items: center; background: #fff; padding-left: 2px; border: 1px solid #999; border-width: 1px 1px 0; }
.v .sw { margin-right: 7px; }
.v-off { background: #f0f0f0; }
.pr .ln { margin-left: 2px; }

/* quick properties */
.quick { position: absolute; left: 684px; top: 270px; width: 333px; height: 102px; display: flex; background: #444; }
.q-grip { flex: 0 0 14px; height: 34px; margin-top: 7px; background: radial-gradient(#bbb 1px, transparent 1.300px) 3px 0 / 4px 4px; }
.q-body { flex: 0 0 302px; margin: 1px 0 2px 2px; background: #ececec; padding: 2px 1px; }
.q-top { display: flex; align-items: flex-start; height: 30px; }
.dd-q { width: 268px; height: 24px; padding-left: 2px; }
.q-btn { width: 24px; height: 24px; margin-left: 6px; padding: 3px; border: 1px solid #999; border-radius: 3px; background: #dedede; display: block; }
.q-grid { width: 299px; margin-left: -1px; border: 1px solid #999; }
.qr { display: grid; grid-template-columns: 113px 1fr; height: 21px; line-height: 19px; }
.qr .k { border: 0; padding-left: 4px; background: #f0f0f0; }
.qr .v { border-width: 0 0 0 1px; padding-left: 2px; }
.qr + .qr .k { border-top: 1px solid #999; }
.qr + .qr .v { border-width: 1px 0 0 1px; }
.qr .v .sw { margin-right: 6px; }
.ln-q { width: 60px; margin: 0 6px 0 2px; }
.q-side { flex: 1; display: flex; flex-direction: column; align-items: center; padding-top: 5px; }
.q-x { width: 8px; height: 8px; fill: none; stroke: #fff; stroke-width: 2; }
.q-lines { width: 8px; height: 7px; margin-top: 4px; border: 1px solid #ddd; border-width: 1px 0; background: linear-gradient(#ddd, #ddd) center / 100% 1px no-repeat; }

/* watermark */
.watermark { position: absolute; left: 995px; top: 636px; font: 25px "Noto Sans CJK SC", sans-serif; line-height: 34px; word-spacing: 4px; color: #e6e6e6; text-shadow: 0 0 2px #333; white-space: nowrap; }
```
